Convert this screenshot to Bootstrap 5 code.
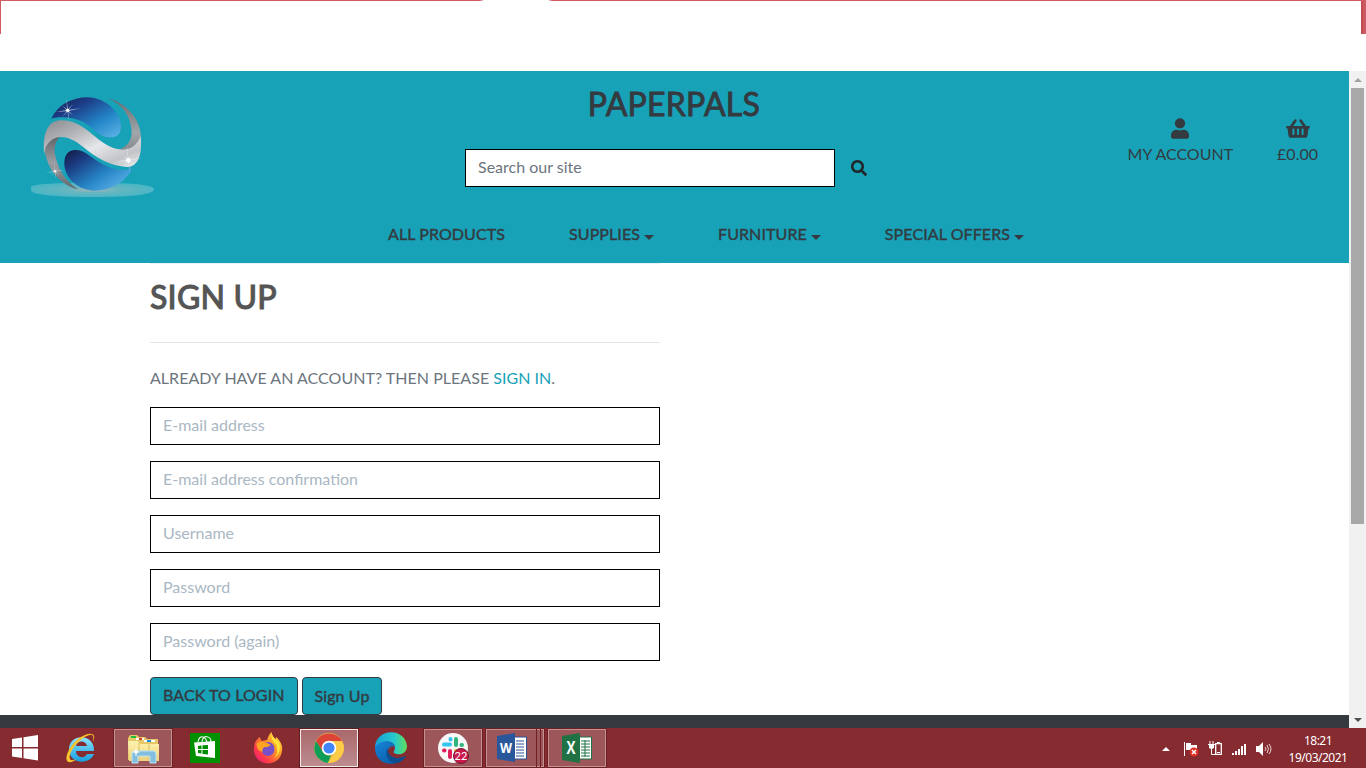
<!DOCTYPE html>
<html lang="en">
<head>
<meta charset="utf-8">
<meta name="viewport" content="width=device-width, initial-scale=1">
<title>Paperpals - Sign Up</title>
<link rel="stylesheet" href="https://cdn.jsdelivr.net/npm/bootstrap@5.3.0/dist/css/bootstrap.min.css">
<style>
body{font-family:Lato,"Liberation Sans",sans-serif;width:1366px;height:768px;overflow:hidden;background:#fff;color:#555}
.browser-top{height:71px}
.frame-line{height:1px;background:linear-gradient(90deg,#d05c66 0 480px,#fff 484px 548px,#d05c66 552px)}
.frame-left{width:1px;height:33px;background:#d05c66}
.frame-right{width:5px;height:33px;background:#cb5a64;border-left:2px solid #c54d52}
.viewport{height:657px}
.page{width:1349px}
.site-head{background:#17a2b8;height:192px;color:#343a40}
.logo-col{width:465px;padding:14px 0 0 20px}
.brand-title{font-size:32px;letter-spacing:.25px;-webkit-text-stroke:.9px currentColor;line-height:40px;margin:13px 0 25px;height:40px}
.search-box{width:370px;height:38px;border:1px solid #000;border-radius:0;padding-top:4px;padding-bottom:8px}
.search-box::placeholder{color:#6c757d}
.search-btn{width:48px;height:38px}
.account-cols{width:466px;padding-right:31px;padding-top:47px;gap:44px}
.account-cols span{margin-top:3px}
.site-nav{padding-left:388px;gap:64px;letter-spacing:.09px;-webkit-text-stroke:.4px currentColor;line-height:24px;padding-top:23px}
.caret{display:inline-block;border:5px solid transparent;border-top-color:#343a40;border-bottom:0;margin-left:4px;vertical-align:0}
.signup{width:510px;margin-left:150px;height:452px;border-top:1px solid #e8f1f3}
.signup h1{font-size:32px;letter-spacing:.2px;-webkit-text-stroke:.9px currentColor;line-height:40px;margin:13px 0 25px;color:#555}
.signup hr{margin:0 0 23px;border-top:1px solid #e5e5e5;opacity:1}
.signup p{line-height:24px;margin-bottom:17px;color:#6c757d;letter-spacing:.03px}
.signup p a{color:#17a2b8}
.field{height:38px;border:1px solid #000;border-radius:0;margin-bottom:16px;padding-top:4px;padding-bottom:8px}
.field::placeholder{color:#aab7c4}
.act{background:#17a2b8;border:1px solid #343a40;border-radius:4px;color:#343a40;letter-spacing:.09px;-webkit-text-stroke:.4px currentColor;height:38px;padding-top:5px}
.foot{height:13px;background:#343a40}
.scroller{width:17px;background:#f1f1f1}
.scroller .arr{height:17px}
.thumb{width:13px;height:436px;background:#a8a8a8}
.taskbar{height:40px;background:#862b30;color:#fff}
.task{height:38px;width:58px;margin-top:1px;display:flex;align-items:center;justify-content:center}
.open-app{background:#9d575b;border:1px solid #c39093;outline:1px solid #6c2024;outline-offset:0}
.current-app{background:linear-gradient(#a9686c,#bd8c8e);border:1px solid #f5e9e9;outline:1px solid #641c20}
.clock{font:12px/17px "Noto Sans","Open Sans",sans-serif;width:66px;letter-spacing:-.5px;padding-top:2px}
</style>
</head>
<body>
<div class="browser-top">
  <div class="frame-line"></div>
  <div class="d-flex justify-content-between"><div class="frame-left"></div><div class="frame-right"></div></div>
</div>
<div class="viewport d-flex">
  <main class="page">
    <header class="site-head">
      <div class="d-flex justify-content-between" style="height:128px">
        <div class="logo-col">
          <svg width="145" height="120" viewBox="0 0 435 360">
            <defs>
              <linearGradient id="blueA" x1="0" y1="0" x2="1" y2="1"><stop offset="0" stop-color="#161b45"/><stop offset=".3" stop-color="#1d3d88"/><stop offset=".65" stop-color="#2386c8"/><stop offset="1" stop-color="#62b5e8"/></linearGradient>
              <linearGradient id="blueB" x1="0" y1="0" x2="1" y2=".9"><stop offset="0" stop-color="#14193e"/><stop offset=".25" stop-color="#1b3a80"/><stop offset=".6" stop-color="#2583c4"/><stop offset="1" stop-color="#66baf0"/></linearGradient>
              <linearGradient id="silver" x1="0" y1="0" x2="1" y2="1"><stop offset="0" stop-color="#888a8e"/><stop offset=".3" stop-color="#b4b6ba"/><stop offset=".55" stop-color="#e6e7ea"/><stop offset=".8" stop-color="#c2c4c7"/><stop offset="1" stop-color="#eee"/></linearGradient>
              <linearGradient id="edgeR" x1="0" y1="0" x2="0" y2="1"><stop offset="0" stop-color="#656b70"/><stop offset=".5" stop-color="#a2a7aa"/><stop offset="1" stop-color="#626a70"/></linearGradient>
              <linearGradient id="edgeL" x1="0" y1="0" x2="0" y2="1"><stop offset="0" stop-color="#606468"/><stop offset=".5" stop-color="#9b9fa3"/><stop offset="1" stop-color="#62676b"/></linearGradient>
              <radialGradient id="floor"><stop offset="0" stop-color="#a6b5b6"/><stop offset=".4" stop-color="#68b6c0"/><stop offset="1" stop-color="#4cb6c5"/></radialGradient>
              <path id="spark" d="M-4-38L1-4 16-18 3-2 38-6 4 2 17 16 2 4 5 34-1 4-16 20-3 3-36 5-4-1-17-15-2-3Z"/>
            </defs>
            <path d="M33 307C33 298 85 293 217 293S402 300 402 313C402 328 345 336 217 336S33 328 33 316Z" fill="url(#floor)"/>
            <path d="M94 101C113 60 155 37 203 37C258 39 302 82 303 123C303 147 291 158 270 157C237 156 218 127 188 110C157 95 120 94 94 101Z" fill="url(#blueA)"/>
            <path d="M265 40C325 57 365 107 363 164C362 202 350 225 326 247C303 235 279 213 291 195C317 191 336 167 335 141C333 93 307 60 265 40Z" fill="url(#edgeR)"/>
            <path d="M76 206C66 159 81 151 120 155C104 170 100 194 108 220C118 262 142 292 174 313C124 300 87 260 76 206Z" fill="url(#edgeL)"/>
            <path d="M73 210C66 147 84 105 123 106C191 107 217 159 268 184C310 204 347 194 362 154C369 216 349 249 319 246C267 242 226 217 187 184C151 153 113 147 91 168C79 179 74 192 73 210Z" fill="url(#silver)"/>
            <path d="M163 195C193 193 214 219 242 234C272 251 307 262 336 250C319 290 273 317 224 317C174 316 135 280 133 238C132 214 142 196 163 195Z" fill="url(#blueB)"/>
            <g fill="#e9eef6" fill-opacity=".6"><use href="#spark" x="143" y="76"/><use href="#spark" transform="translate(325 225) scale(1.15)"/><use href="#spark" transform="translate(105 259) scale(.75)"/></g>
            <g fill="#fff"><circle cx="143" cy="76" r="5"/><circle cx="325" cy="226" r="7"/><circle cx="105" cy="259" r="3"/></g>
          </svg>
        </div>
        <div class="text-center">
          <div class="brand-title">PAPERPALS</div>
          <form class="d-flex"><input class="form-control search-box" placeholder="Search our site" aria-label="Search"><button type="button" class="btn search-btn p-0 d-flex align-items-center justify-content-center" aria-label="Search"><svg width="16" height="16" viewBox="0 0 512 512" fill="#212529"><path d="M505 442.700L405.300 343c-4.500-4.500-10.600-7-17-7H372c27.600-35.300 44-79.700 44-128C416 93.100 322.900 0 208 0S0 93.100 0 208s93.100 208 208 208c48.300 0 92.700-16.400 128-44v16.300c0 6.400 2.500 12.500 7 17l99.700 99.700c9.400 9.400 24.600 9.400 33.900 0l28.300-28.300c9.400-9.400 9.400-24.600.1-34zM208 336c-70.700 0-128-57.200-128-128 0-70.700 57.200-128 128-128 70.700 0 128 57.200 128 128 0 70.700-57.200 128-128 128z"/></svg></button></form>
        </div>
        <div class="account-cols d-flex justify-content-end text-center">
          <div class="d-flex flex-column align-items-center"><svg width="18" height="21" viewBox="0 0 448 512" fill="#343a40"><path d="M224 256c70.700 0 128-57.300 128-128S294.700 0 224 0 96 57.300 96 128s57.300 128 128 128zm89.600 32h-16.700c-22.200 10.200-46.900 16-72.900 16s-50.600-5.800-72.900-16h-16.700C60.200 288 0 348.200 0 422.400V464c0 26.500 21.500 48 48 48h352c26.500 0 48-21.500 48-48v-41.600c0-74.200-60.200-134.400-134.400-134.400z"/></svg><span class="lh-base">MY ACCOUNT</span></div>
          <div class="d-flex flex-column align-items-center"><svg width="24" height="21" viewBox="0 0 576 512" fill="#343a40"><path d="M576 216v16c0 13.255-10.745 24-24 24h-8l-26.113 182.788C514.509 462.435 494.257 480 470.370 480H105.630c-23.887 0-44.139-17.565-47.518-41.212L32 256h-8c-13.255 0-24-10.745-24-24v-16c0-13.255 10.745-24 24-24h67.341l106.780-146.821c10.395-14.292 30.407-17.453 44.701-7.058 14.293 10.395 17.453 30.408 7.058 44.701L170.477 192h235.046L326.120 82.821c-10.395-14.292-7.234-34.306 7.059-44.701 14.291-10.395 34.306-7.235 44.701 7.058L484.659 192H552c13.255 0 24 10.745 24 24zM312 392V280c0-13.255-10.745-24-24-24s-24 10.745-24 24v112c0 13.255 10.745 24 24 24s24-10.745 24-24zm112 0V280c0-13.255-10.745-24-24-24s-24 10.745-24 24v112c0 13.255 10.745 24 24 24s24-10.745 24-24zm-224 0V280c0-13.255-10.745-24-24-24s-24 10.745-24 24v112c0 13.255 10.745 24 24 24s24-10.745 24-24z"/></svg><span class="lh-base">£0.00</span></div>
        </div>
      </div>
      <nav class="site-nav d-flex text-nowrap"><span>ALL PRODUCTS</span><span>SUPPLIES<i class="caret"></i></span><span>FURNITURE<i class="caret"></i></span><span>SPECIAL OFFERS<i class="caret"></i></span></nav>
    </header>
    <section class="signup overflow-hidden">
      <h1>SIGN UP</h1>
      <hr>
      <p>ALREADY HAVE AN ACCOUNT? THEN PLEASE <a href="#" class="text-decoration-none">SIGN IN</a>.</p>
      <input class="form-control field" placeholder="E-mail address">
      <input class="form-control field" placeholder="E-mail address confirmation">
      <input class="form-control field" placeholder="Username">
      <input class="form-control field" placeholder="Password">
      <input class="form-control field" placeholder="Password (again)">
      <div class="d-flex gap-1"><a class="btn act" href="#">BACK TO LOGIN</a><button class="btn act">Sign Up</button></div>
    </section>
    <div class="foot"></div>
  </main>
  <div class="scroller d-flex flex-column align-items-center">
    <div class="arr d-flex align-items-center"><svg width="8" height="4"><path d="M0 4L4 0 8 4Z" fill="#a3a3a3"/></svg></div>
    <div class="thumb"></div>
    <div class="arr d-flex align-items-center mt-auto"><svg width="8" height="4"><path d="M0 0H8L4 4Z" fill="#505050"/></svg></div>
  </div>
</div>
<footer class="taskbar d-flex">
  <div class="task" style="width:50px"><svg width="28" height="26" viewBox="0 0 28 26" fill="#fff"><path d="M1 4L11 2.500V12H1ZM12.500 2.200L27 0V12H12.500ZM1 13.500H11V23L1 21.500ZM12.500 13.500H27V25.500L12.500 23.300Z"/></svg></div>
  <div class="task" style="width:62px"><svg width="32" height="32" viewBox="0 0 32 32"><defs><linearGradient id="ie" x2="0" y2="1"><stop stop-color="#8be4ff"/><stop offset="1" stop-color="#159ddc"/></linearGradient></defs><path d="M29 19H11C11 26 20 27 22 22H29C25 33 4 33 4 17C4 1 30 1 29 19ZM11 14H22C21 8 12 8 11 14Z" fill="url(#ie)" fill-rule="evenodd"/><path d="M28 10C33-1 22 0 13 7C3 15-2 29 4 30C7 31 10 28 12 27C5 30 3 27 6 20C11 9 26-1 28 4C29 6 28 8 28 10Z" fill="#f9c32c"/></svg></div>
  <div class="task open-app" style="margin-left:2px"><svg width="33" height="31" viewBox="0 0 33 31"><defs><linearGradient id="fold" x2="0" y2="1"><stop stop-color="#fff2b0"/><stop offset="1" stop-color="#edd27a"/></linearGradient></defs><path d="M1 5L3 2H10L12 4H18L20 6H31V27H1Z" fill="#e7c867"/><path d="M4 3H9V5H4Z" fill="#1ebd3d"/><path d="M9 5H17V7H9Z" fill="#fff"/><path d="M12 5H15V7H12Z" fill="#d64023"/><path d="M17 7H28V9H17Z" fill="#fff"/><path d="M20 7H24V9H20Z" fill="#198ee0"/><path d="M1 8H11L13 11H32V28H2Z" fill="url(#fold)"/><path d="M12 9V27M22 11V27" stroke="#e0c066"/><path d="M5 30V21Q5 18 8 18H26Q29 18 29 21V30H23V23H11V30Z" fill="#82bede" stroke="#b8e4f7"/><path d="M9 14L10 18 13 19 10 20 9 24 8 20 5 19 8 18Z" fill="#fff"/></svg></div>
  <div class="task" style="width:65px"><svg width="30" height="30" viewBox="0 0 30 30"><path fill="#009000" d="M0 0H30V30H0Z"/><path d="M8 9Q9 3 13 4Q16 5 17 9M12 9Q13 2 18 4Q21 5 21 9" fill="none" stroke="#e0f0e0" stroke-width="1.200"/><path d="M4 9.500L25 8V25L6 23Z" fill="#fff"/><path d="M8 13L11.500 12.500V16H8ZM12.500 12.300L18 12V16H12.500ZM8 17H11.500V20.500L8 20ZM12.500 17H18V21.500L12.500 21Z" fill="#008d00"/></svg></div>
  <div class="task" style="width:61px"><svg width="30" height="32" viewBox="0 0 32 32" preserveAspectRatio="none"><defs><linearGradient id="fx" x1="1" x2="0" y2="1"><stop stop-color="#fff04c"/><stop offset=".4" stop-color="#ff9824"/><stop offset=".75" stop-color="#ff354d"/><stop offset="1" stop-color="#d61a8f"/></linearGradient></defs><path d="M1 17Q1 10 5 7L7 5 9 9 15 8Q17 2 20 0Q20 4 24 7L25 5Q32 12 31 18C30 36 1 36 1 17Z" fill="url(#fx)"/><circle cx="16" cy="17" r="7" fill="#7850c8"/><path d="M4 11Q9 8 15 11L19 13Q15 16 12 15Q10 16 10 20Q3 18 4 11Z" fill="#ffa321"/><path d="M20 2Q19 8 25 13Q28 22 22 26Q31 22 28 10Q22 7 20 2Z" fill="#ffe43b"/></svg></div>
  <div class="task current-app" style="margin-left:2px"><svg width="30" height="30" viewBox="0 0 30 30"><circle cx="15" cy="15" r="15" fill="#e9ba40"/><path d="M2 8A15 15 0 0 1 28 8H15L9 19Z" fill="#db4437"/><path d="M2 8L9 19A7 7 0 0 0 17 22L14 30A15 15 0 0 1 2 8Z" fill="#109d58"/><path d="M15 8H28A15 15 0 0 1 14 30L21 19Z" fill="#fdcb45"/><circle cx="15" cy="15" r="7.300" fill="#fff"/><circle cx="15" cy="15" r="5.600" fill="#4285f4"/></svg></div>
  <div class="task" style="width:66px"><svg width="32" height="32" viewBox="0 0 32 32"><defs><linearGradient id="edgeG" x2="1"><stop stop-color="#169ed4"/><stop offset=".6" stop-color="#26c9cf"/><stop offset="1" stop-color="#62df59"/></linearGradient><linearGradient id="edgeBl" x2="1" y2="1"><stop stop-color="#1786d8"/><stop offset="1" stop-color="#07509a"/></linearGradient></defs><path d="M0 16C0-4 30-5 32 14C32 22 24 24 19 21C18 20 20 19 20 15C19 9 10 7 0 16Z" fill="url(#edgeG)"/><path d="M0 16C3 8 20 6 20 16C20 14 15 13 13 18C12 26 23 28 31 24C24 36 0 35 0 16Z" fill="url(#edgeBl)"/><path d="M13 16C8 23 15 32 23 31Q28 29 31 24C22 28 12 26 13 16Z" fill="#0c4d8f"/></svg></div>
  <div class="task open-app"><svg width="32" height="32" viewBox="0 0 32 32"><circle cx="16" cy="16" r="15" fill="#f7f7f7"/><g stroke-width="4" stroke-linecap="round"><path d="M13.500 7V7.500M7 12.500H13" stroke="#36c5f0"/><path d="M19 7V13M24.500 13H25" stroke="#2eb67d"/><path d="M7 18.500H7.500M13 19V25" stroke="#e01e5a"/><path d="M19 19H25" stroke="#ecb22e"/></g><circle cx="24" cy="24" r="7.500" fill="#cc174b" stroke="#701b35"/><text x="24" y="28" font-family="Lato" font-size="11" fill="#fff" text-anchor="middle">22</text></svg></div>
  <div class="d-flex" style="margin-left:4px"><div class="task open-app" style="width:51px"><svg width="30" height="30" viewBox="0 0 30 30"><path fill="#fff" stroke="#285395" d="M16 4H29.500V26H16Z"/><path d="M19 8H27M19 11H27M19 14H27M19 17H27M19 20H27M19 23H27" stroke="#285395"/><path fill="#2a579a" d="M0 3L18 0V29L0 26Z"/><text x="9" y="20" font-family="Open Sans" font-size="14" font-weight="700" fill="#fff" text-anchor="middle" textLength="12" lengthAdjust="spacingAndGlyphs">W</text></svg></div><div class="task open-app" style="width:4px;border-left:0"></div><div class="task open-app" style="width:3px;border-left:0"></div></div>
  <div class="task open-app" style="margin-left:4px"><svg width="30" height="30" viewBox="0 0 30 30"><path fill="#fff" stroke="#217346" d="M16 4H29.500V26H16Z"/><path d="M19 8H28M19 11H28M19 14H28M19 17H28M19 20H28M19 23H28M23 7V24" stroke="#217346"/><path fill="#207245" d="M0 3L18 0V30L0 27Z"/><text x="9" y="21" font-family="Open Sans" font-size="17" font-weight="700" fill="#fff" text-anchor="middle" textLength="9" lengthAdjust="spacingAndGlyphs">X</text></svg></div>
  <div class="ms-auto d-flex align-items-center" style="padding-right:15px">
    <svg width="110" height="18" viewBox="0 0 110 18" style="margin-right:13px;margin-top:2px"><path d="M0 11L4 7 8 11Z" fill="#fff"/><path d="M22.500 2V16" stroke="#fff"/><path d="M24 3H29V5H35V10H24Z" fill="#fff"/><circle cx="32" cy="12" r="4.500" fill="#e02d22"/><path d="M30 10L34 14M34 10L30 14" stroke="#fff" stroke-width="1.500"/><path d="M48 1V4M51 1V4M46 4.500H53M49.500 8V14.500H53" stroke="#fff" fill="none"/><path d="M47 5H52V8L50 9H49L47 8Z" fill="#fff"/><path d="M53.700 3.700H59.300V14.300H53.700Z" fill="none" stroke="#fff" stroke-width="1.300"/><path d="M55 2H58V3H55ZM55 12H58V13H55Z" fill="#fff"/><path d="M70 13H72V15H70ZM73 11H75V15H73ZM76 9H78V15H76ZM79 6H81V15H79ZM82 4H84V15H82Z" fill="#fff"/><path d="M94 6H97L101 2V16L97 12H94Z" fill="#fff"/><path d="M103 7Q105 9 103 11M105 5Q108 9 105 13M107 4Q111 9 107 14" stroke="#fff" stroke-width=".8" fill="none"/></svg>
    <div class="clock text-center"><div>18:21</div><div>19/03/2021</div></div>
  </div>
</footer>
<script src="https://cdn.jsdelivr.net/npm/bootstrap@5.3.0/dist/js/bootstrap.bundle.min.js"></script>
</body>
</html>
